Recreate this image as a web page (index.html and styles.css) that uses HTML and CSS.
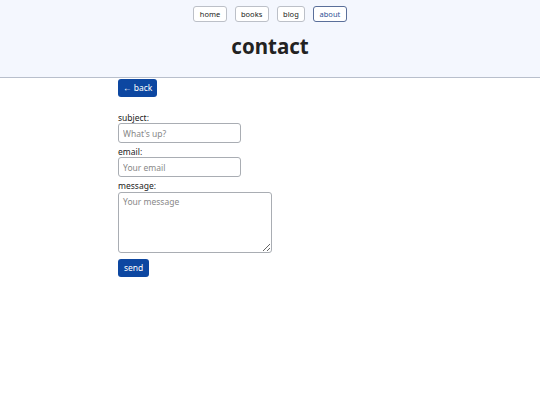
FILE: index.html
```html
<!DOCTYPE html>
<html lang="en">
<head>
<meta charset="utf-8">
<title>contact</title>
<link rel="stylesheet" href="styles.css">
</head>
<body>
<header class="site-header">
  <nav class="nav">
    <a class="nav-link" href="#">home</a>
    <a class="nav-link" href="#">books</a>
    <a class="nav-link" href="#">blog</a>
    <a class="nav-link nav-link-active" href="#">about</a>
  </nav>
  <h1 class="title">contact</h1>
</header>
<main class="content">
  <a class="btn back" href="#">&larr; back</a>
  <form class="form">
    <label class="field">
      <span class="label">subject:</span>
      <input class="input" type="text" placeholder="What's up?">
    </label>
    <label class="field">
      <span class="label">email:</span>
      <input class="input" type="email" placeholder="Your email">
    </label>
    <label class="field field-message">
      <span class="label">message:</span>
      <textarea class="textarea" placeholder="Your message"></textarea>
    </label>
    <button class="btn send" type="button">send</button>
  </form>
</main>
</body>
</html>
```
FILE: styles.css
```css
* { box-sizing: border-box; }
body {
  margin: 0;
  font-family: "Noto Sans", "Open Sans", sans-serif;
  color: #222;
  background: #fff;
}
.site-header {
  background: #f4f7fe;
  border-bottom: 1px solid #b8bfcc;
  height: 78px;
  padding-top: 6px;
  display: flex;
  flex-direction: column;
  align-items: center;
}
.nav {
  display: flex;
  gap: 8px;
}
.nav-link {
  display: block;
  height: 16px;
  line-height: 14px;
  padding: 0 5.4px;
  font-size: 7.5px;
  color: #222;
  text-decoration: none;
  background: #fff;
  border: 1px solid #bcc0c8;
  border-radius: 3px;
}
.nav-link-active {
  color: #2d4f94;
  border-color: #5a6f9a;
}
.title {
  margin: 10px 0 0;
  font-size: 20.5px;
  line-height: 28px;
  font-weight: 700;
  color: #222;
}
.content {
  width: 304px;
  margin: 0 auto;
  padding-top: 1px;
  display: flex;
  flex-direction: column;
  align-items: flex-start;
}
.btn {
  display: block;
  background: #0d47a1;
  color: #fff;
  border: none;
  border-radius: 3px;
  font-family: inherit;
  font-size: 8.5px;
  text-decoration: none;
  cursor: pointer;
}
.back {
  height: 18px;
  line-height: 18px;
  padding: 0 5px;
}
.form {
  display: flex;
  flex-direction: column;
  align-items: flex-start;
  margin-top: 15px;
}
.field {
  display: flex;
  flex-direction: column;
  align-items: flex-start;
  margin-bottom: 3px;
}
.label {
  font-size: 8.5px;
  line-height: 11px;
}
.field-message .label { margin-bottom: 1px; }
.input, .textarea {
  display: block;
  font-family: inherit;
  font-size: 8.5px;
  color: #222;
  border: 1px solid #a9adb3;
  border-radius: 3px;
  background: #fff;
  padding: 3px 4px;
}
.input {
  width: 123px;
  height: 20px;
}
.textarea {
  width: 154px;
  height: 61px;
  resize: vertical;
}
.input::placeholder, .textarea::placeholder { color: #888; }
.send {
  margin-top: 3px;
  height: 18px;
  line-height: 18px;
  padding: 0 6px;
}
```
